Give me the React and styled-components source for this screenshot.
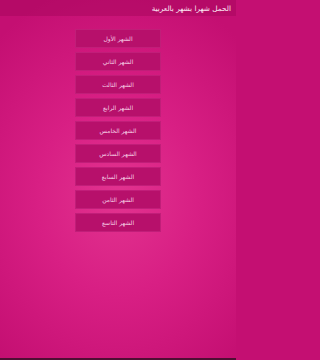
import React from 'react'
import styled, { createGlobalStyle } from 'styled-components'

const Global = createGlobalStyle`
html, body {
  margin: 0;
  padding: 0;
  height: 100%;
  background: #c40f72;
}
#root {
  height: 100%;
}
`;

const Screen = styled.div`
width: 236px;
height: 360px;
display: flex;
flex-direction: column;
box-sizing: border-box;
background: radial-gradient(ellipse 75% 60% at 50% 55%, #e2338f 0%, #d81f84 45%, #c40f72 100%);
border-bottom: 2px solid #4e0f33;
font-family: "DejaVu Sans", "Noto Sans", sans-serif;
direction: rtl;
`;

const Header = styled.div`
height: 16px;
display: flex;
align-items: center;
padding: 0 5px;
background: rgba(170, 8, 95, 0.55);
color: #fbe6f2;
font-size: 7.3px;
`;

const List = styled.div`
display: flex;
flex-direction: column;
align-items: center;
gap: 4.5px;
padding-top: 13px;
`;

const Month = styled.button`
width: 86px;
height: 18.5px;
display: flex;
align-items: center;
justify-content: center;
box-sizing: border-box;
border: 1px solid rgba(200, 40, 130, 0.6);
background: #b7106b;
color: #f6cde5;
font-family: inherit;
font-size: 6px;
padding: 0;
direction: rtl;
`;

const months = [
  'الشهر الأول',
  'الشهر الثاني',
  'الشهر الثالث',
  'الشهر الرابع',
  'الشهر الخامس',
  'الشهر السادس',
  'الشهر السابع',
  'الشهر الثامن',
  'الشهر التاسع',
];

const App = () => {
  return (
    <>
      <Global />
      <Screen>
        <Header>الحمل شهرا بشهر بالعربية</Header>
        <List>
          {months.map((m) => (
            <Month key={m}>{m}</Month>
          ))}
        </List>
      </Screen>
    </>
  )
}

export default App
